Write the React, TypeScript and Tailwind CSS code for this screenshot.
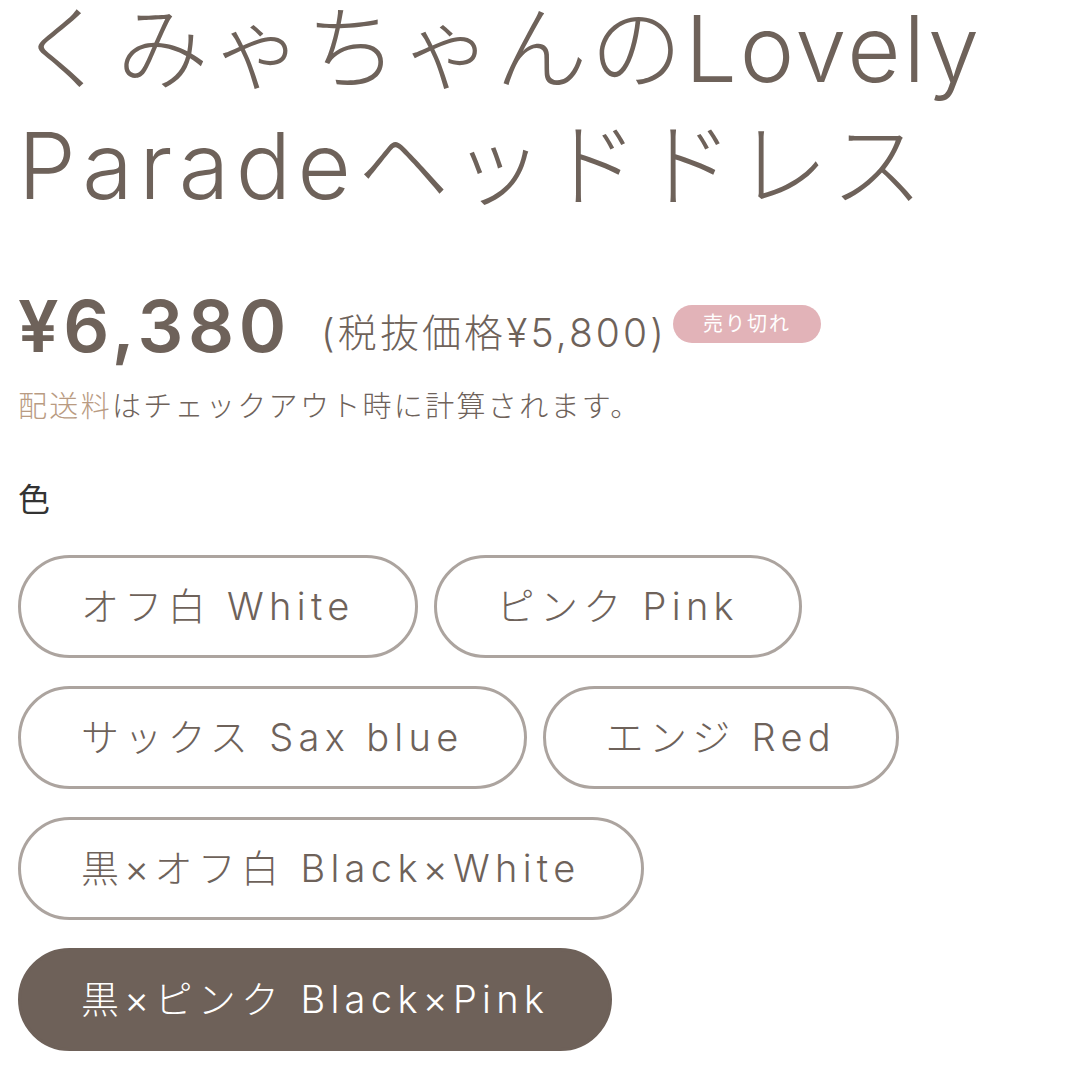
import React from "react";

const COLORS: { label: string; selected?: boolean }[] = [
  { label: "オフ白 White" },
  { label: "ピンク Pink" },
  { label: "サックス Sax blue" },
  { label: "エンジ Red" },
  { label: "黒×オフ白 Black×White" },
  { label: "黒×ピンク Black×Pink", selected: true },
];

const FONT = {
  fontFamily: "Inter, 'Noto Sans CJK JP', sans-serif",
};

const App: React.FC = () => {
  return (
    <div
      className="w-[1080px] h-[1080px] overflow-hidden bg-white text-[#6e625a] px-[18px]"
      style={FONT}
    >
      {/* TITLE */}
      <h1 className="text-[92px] font-light tracking-[0.03em]">
        <div className="leading-[97px]">くみゃちゃんのLovely</div>
        <div className="leading-[117px] mt-[10px]">
          <span className="tracking-[0.07em]">Parade</span>ヘッドドレス
        </div>
      </h1>

      {/* PRICE */}
      <div className="flex items-center mt-[66px]">
        <span className="text-[72px] leading-none font-semibold tracking-[0.065em]">
          ¥6,380
        </span>
        <span className="text-[39px] font-light tracking-[0.08em] ml-[30px] mt-[14px]">
          (税抜価格¥5,800)
        </span>
        <span className="ml-[6px] -mt-[4px] rounded-full bg-[#e2b3b8] text-white text-[20px] px-[30px] h-[38px] flex items-center tracking-[0.1em]">
          売り切れ
        </span>
      </div>

      {/* SHIPPING */}
      <p className="text-[29px] tracking-[0.08em] mt-[22px] font-light">
        <span className="text-[#b99b82]">配送料</span>
        はチェックアウト時に計算されます。
      </p>

      {/* OPTIONS */}
      <div className="mt-[48px]">
        <div className="text-[32px] text-[#333]">色</div>
        <div className="flex flex-wrap gap-x-[16px] gap-y-[28px] mt-[31px]">
          {COLORS.map((c) => (
            <button
              key={c.label}
              className={`h-[103px] px-[60px] rounded-full border-[3px] text-[38px] font-light tracking-[0.14em] ${
                c.selected
                  ? "bg-[#6e6159] border-[#6e6159] text-white"
                  : "bg-white border-[#aca49f] text-[#6e625a]"
              }`}
            >
              {c.label}
            </button>
          ))}
        </div>
      </div>
    </div>
  );
};

export default App;
